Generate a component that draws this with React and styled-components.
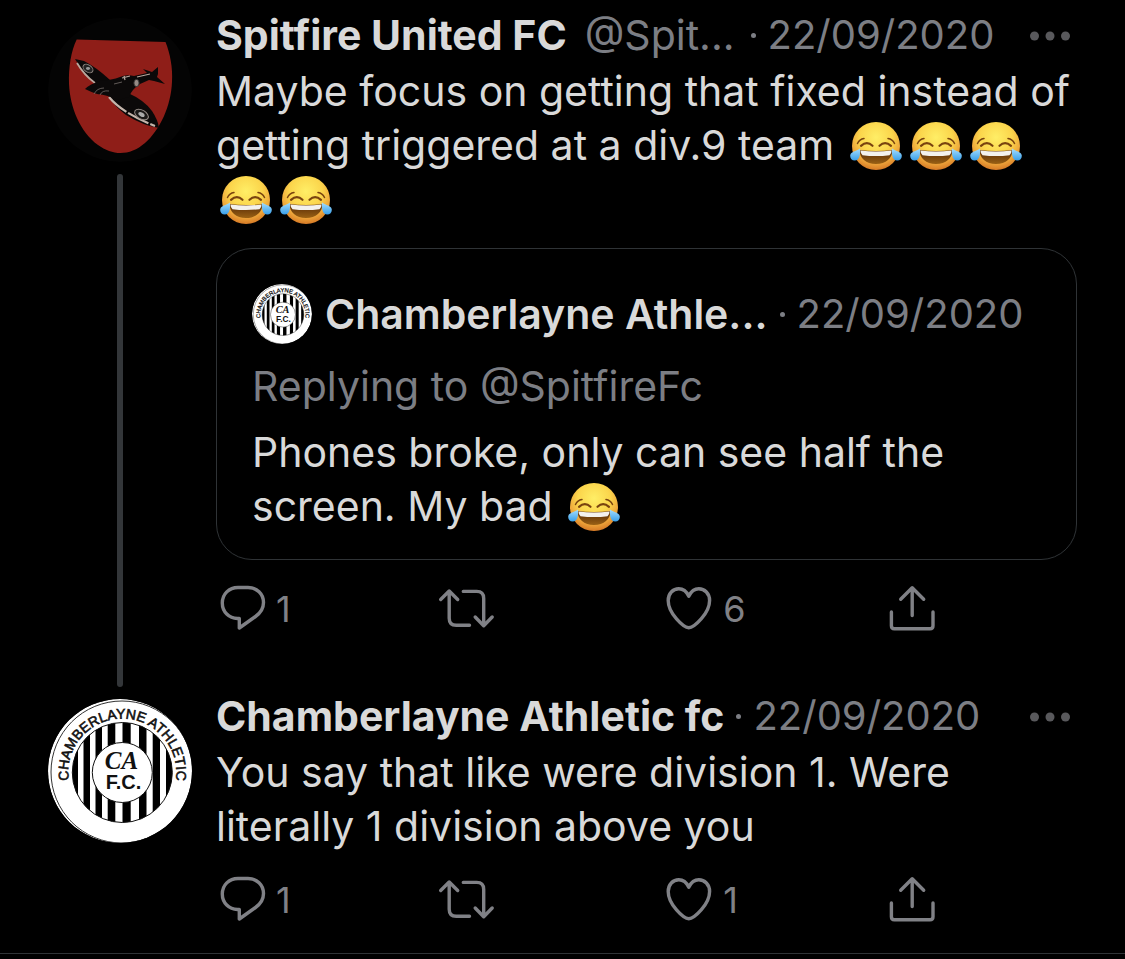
import { useId } from "react";
import styled, { createGlobalStyle } from "styled-components";

const GlobalStyle = createGlobalStyle`
  * {
    box-sizing: border-box;
  }
  body {
    margin: 0;
    background-color: #000;
    color: #d9d9d9;
    font-family: Inter, "Liberation Sans", sans-serif;
    font-size: 41px;
    line-height: 54px;
  }
`;

const Thread = styled.main`
  padding-top: 6px;
  border-bottom: 1px solid #2f3336;
`;

const Post = styled.article`
  display: flex;
  gap: 24px;
  padding: 0 48px;
`;

const Side = styled.div`
  flex: none;
  width: 144px;
  padding-top: 12px;
  display: flex;
  flex-direction: column;
  align-items: center;
  gap: 12px;
`;

const ThreadLine = styled.div`
  flex: 1;
  width: 6px;
  border-radius: 3px;
  background-color: #333639;
`;

const Content = styled.div`
  flex: 1;
  min-width: 0;
  padding: 2px 0 ${(props) => (props.$last ? "29px" : "54px")};
`;

const Header = styled.header`
  display: flex;
  align-items: center;
  white-space: nowrap;
`;

const Name = styled.a`
  color: #d9d9d9;
  font-weight: 650;
  text-decoration: none;
`;

const Handle = styled.a`
  margin: 0 4px 0 18px;
  color: #7c7e84;
  text-decoration: none;
`;

const Dot = styled.span`
  flex: none;
  width: 5px;
  height: 5px;
  margin: 0 12px;
  border-radius: 50%;
  background-color: #7c7e84;
`;

const Time = styled.time`
  color: #7c7e84;
  font-size: 40px;
`;

const MoreButton = styled.button`
  margin-left: auto;
  padding: 0 6px 0 0;
  display: flex;
  border: none;
  background: none;
  color: #59595c;
`;

const Text = styled.p`
  margin: ${(props) => (props.$quoted ? "12px" : "2px")} 0 0;
`;

const Quote = styled.section`
  margin-top: 22px;
  padding: 35px 35px 26px;
  border: 1px solid #2f3336;
  border-radius: 36px;
`;

const QuoteHeader = styled(Header)`
  height: 60px;
`;

const QuoteName = styled(Name)`
  margin-left: 13px;
  font-weight: 600;
`;

const Replying = styled.p`
  margin: 15px 0 0;
  color: #7c7e84;
`;

const Actions = styled.div`
  display: grid;
  grid-template-columns: 26% 26% 26% 1fr;
  margin-top: ${(props) => (props.$tight ? "23px" : "25px")};
  padding-left: 1px;
`;

const ActionButton = styled.button`
  display: flex;
  align-items: center;
  gap: 5px;
  height: 48px;
  padding: 0;
  border: none;
  background: none;
  color: #808186;
  font-family: inherit;
  font-size: 36px;
`;

const ActionIcon = styled.svg`
  width: 54px;
  height: 48px;
  overflow: visible;
  fill: none;
  stroke: currentColor;
  stroke-width: 3.4;
  stroke-linecap: round;
  stroke-linejoin: round;
`;

const Round = styled.svg`
  flex: none;
  display: block;
  width: ${(props) => props.$size}px;
  height: ${(props) => props.$size}px;
  border-radius: 50%;
`;

const EmojiSvg = styled.svg`
  width: 52px;
  height: 48px;
  margin: 0 4px;
  vertical-align: -10px;
`;

const Joy = () => {
  const id = useId();
  return (
    <EmojiSvg viewBox="0 0 52 48" role="img" aria-label="😂">
      <defs>
        <radialGradient id={id + "f"} cx="50%" cy="32%" r="68%">
          <stop offset="0" stopColor="#ffee66" />
          <stop offset="0.5" stopColor="#fbd54c" />
          <stop offset="0.8" stopColor="#eda43a" />
          <stop offset="1" stopColor="#d67a26" />
        </radialGradient>
        <linearGradient id={id + "t"} x1="0" y1="0" x2="0" y2="1">
          <stop offset="0" stopColor="#a5deff" />
          <stop offset="1" stopColor="#399fe8" />
        </linearGradient>
        <linearGradient id={id + "m"} x1="0" y1="0" x2="0" y2="1">
          <stop offset="0.4" stopColor="#6f3e0c" />
          <stop offset="1" stopColor="#9a6114" />
        </linearGradient>
      </defs>
      <circle cx="26" cy="24" r="24" fill={`url(#${id}f)`} />
      <g fill="none" stroke="#79430f" strokeLinecap="round">
        <path d="M7.5 21.5 Q9.5 17.2 14 16.5" strokeWidth="1.5" />
        <path d="M44.5 21.5 Q42.5 17.2 38 16.5" strokeWidth="1.5" />
        <path d="M11 23.8 Q17 18.6 22.5 23.8" strokeWidth="2.2" />
        <path d="M29.5 23.8 Q35 18.6 41 23.8" strokeWidth="2.2" />
      </g>
      <path d="M9.5 28 Q26 30 42.5 28 C42.5 36 36 42 26 42 C16 42 9.5 36 9.5 28 Z" fill={`url(#${id}m)`} />
      <path d="M10.5 28.4 Q26 30.4 41.5 28.4 Q41.5 31.5 39.5 33.2 Q26 35 12.5 33.2 Q10.5 31.5 10.5 28.4 Z" fill="#f3f1ee" />
      <path d="M10 26.5 C10.5 31 10 38.5 4.8 38.5 C1.5 38.5 -0.2 35.8 0.3 33 C1 29.5 6 29.5 10 26.5 Z" fill={`url(#${id}t)`} />
      <path d="M42 26.5 C41.5 31 42 38.5 47.2 38.5 C50.5 38.5 52.2 35.8 51.7 33 C51 29.5 46 29.5 42 26.5 Z" fill={`url(#${id}t)`} />
    </EmojiSvg>
  );
};

const SpitfireAvatar = () => (
  <Round $size={144} viewBox="0 0 144 144" role="img" aria-label="Spitfire United FC">
    <circle cx="72" cy="72" r="72" fill="#040404" />
    <path
      d="M28.7 21.5 L117.5 24 C122 35 125 50 124 64 C123 88 112 112 97 125 C82 138 65 138 50 127 C32 114 22 89 21 66 C20.5 49 23 33 28.7 21.5 Z"
      fill="#8f1e18"
    />
    {/* wings */}
    <path d="M27 41 L36 43 Q48 49 62 62 L50 67 Q36 57 27 41 Z" fill="#0b0909" />
    <path d="M29 45 Q36 57 47 65" fill="none" stroke="#b9a79d" strokeWidth="1.8" />
    <path d="M60 77 L80 75 Q96 82 104 93 Q110 102 111 110 Q96 108 78 97 Q66 88 60 77 Z" fill="#0b0909" />
    <path d="M61 79 Q74 95 107 108" fill="none" stroke="#c4b5ab" strokeWidth="2.2" strokeDasharray="23 2" />
    {/* fuselage and tail */}
    <path
      d="M37 71 Q42 66 52 63 Q64 62 72 59 Q78 56 86 58 L99 55 L95 51 L104 54 L110 49 L110 56 L109 59 L117 66 L106 63 L101 62 L92 66 Q84 71 81 79 L70 82 Q60 77 49 76 Q43 74 37 71 Z"
      fill="#0b0909"
    />
    <path d="M74 60 L82 58 M76 58 L77 62 M89 59 L102 56" stroke="#b9a79d" strokeWidth="1.2" />
    <path d="M46 76 Q49 70 56 70 M52 77 Q54 72 61 73 M66 66 L74 64" fill="none" stroke="#77706c" strokeWidth="0.8" />
    {/* roundels */}
    <ellipse cx="40" cy="50.5" rx="5.5" ry="3.6" transform="rotate(35 40 50.5)" fill="#222" stroke="#8b827d" />
    <ellipse cx="40" cy="50.5" rx="2" ry="1.4" fill="#999" />
    <ellipse cx="93.5" cy="96.5" rx="7.5" ry="4.4" transform="rotate(30 93.5 96.5)" fill="#1b1918" stroke="#938a85" />
    <ellipse cx="93.5" cy="96.5" rx="3.4" ry="2" transform="rotate(30 93.5 96.5)" fill="#aaa" />
    <ellipse cx="88.5" cy="65" rx="2.6" ry="3.6" fill="#958b86" stroke="#333" />
  </Round>
);

const stripes = [
  [24, 6],
  [35.5, 6.5],
  [47.5, 6.5],
  [59.7, 7.6],
  [74.5, 8.2],
  [91, 7.5],
  [104.7, 7.3],
  [118, 7],
];

const ChamberlayneAvatar = ({ size }) => {
  const id = useId();
  return (
    <Round $size={size} viewBox="0 0 144 144" role="img" aria-label="Chamberlayne Athletic FC">
      <defs>
        <clipPath id={id + "c"}>
          <circle cx="74.3" cy="73.5" r="50" />
        </clipPath>
        <path id={id + "p"} d="M23.5 92 A54 54 0 1 1 125.1 92" />
      </defs>
      <circle cx="72" cy="72" r="72" fill="#fff" />
      <circle cx="74" cy="73" r="71" fill="none" stroke="#333" strokeWidth="1" />
      <g clipPath={`url(#${id}c)`}>
        {stripes.map(([x, w]) => (
          <rect key={x} x={x} y="20" width={w} height="108" fill="#000" />
        ))}
      </g>
      <circle cx="74.3" cy="73.5" r="50" fill="none" stroke="#111" />
      <circle cx="74.3" cy="73.5" r="30" fill="#fff" stroke="#111" />
      <text fontFamily="Liberation Sans, sans-serif" fontSize="14" fill="#111" stroke="#111" strokeWidth="0.6" textAnchor="middle">
        <textPath href={`#${id}p`} startOffset="50%">
          CHAMBERLAYNE ATHLETIC
        </textPath>
      </text>
      <text x="73.5" y="70" fontFamily="Liberation Serif, serif" fontStyle="italic" fontWeight="700" fontSize="25" fill="#111" textAnchor="middle">
        CA
      </text>
      <text x="75.5" y="90" fontFamily="Liberation Sans, sans-serif" fontWeight="700" fontSize="20" fill="#111" textAnchor="middle">
        F.C.
      </text>
    </Round>
  );
};

const More = () => (
  <MoreButton type="button" aria-label="More">
    <svg width="42" height="12" viewBox="0 0 42 12" fill="currentColor">
      <circle cx="5.5" cy="7" r="4.5" />
      <circle cx="21" cy="7" r="4.5" />
      <circle cx="36.5" cy="7" r="4.5" />
    </svg>
  </MoreButton>
);

const ActionBar = ({ replies, likes, tight }) => (
  <Actions $tight={tight}>
    <ActionButton type="button" aria-label="Reply">
      <ActionIcon viewBox="0 0 54 48">
        <path d="M20.5 33.5 C12 33.2 5.3 27 5.3 18 C5.3 9 12 2.5 21 2.5 H31 C39.8 2.5 46.5 9 46.5 17.5 C46.5 23.5 43.5 28 38.5 31.5 L22.3 43 V33.5 Z" />
      </ActionIcon>
      {replies}
    </ActionButton>
    <ActionButton type="button" aria-label="Retweet">
      <ActionIcon viewBox="0 0 54 48">
        <path d="M-0.3 14.5 L8.2 6 L16.7 14.5 M8.2 7 V33.3 Q8.2 40.3 15.2 40.3 H28.5" />
        <path d="M22.3 6.4 H35.7 Q42.7 6.4 42.7 13.4 V40 M34.2 32 L42.7 40.7 L51.2 32" />
      </ActionIcon>
    </ActionButton>
    <ActionButton type="button" aria-label="Like">
      <ActionIcon viewBox="0 0 54 48">
        <path d="M24.8 42.7 C19.5 42.7 4.2 28.5 4.2 15.5 C4.2 8.5 9 3.8 14.8 3.8 C19 3.8 22.5 6.5 24.8 11.2 C27.1 6.5 30.6 3.8 34.8 3.8 C40.6 3.8 45.6 8.5 45.6 15.5 C45.6 28.5 30.1 42.7 24.8 42.7 Z" />
      </ActionIcon>
      {likes}
    </ActionButton>
    <ActionButton type="button" aria-label="Share">
      <ActionIcon viewBox="0 0 54 48">
        <path d="M24.2 30.5 V3 M12.7 14.3 L24.2 2.8 L35.7 14.3" />
        <path d="M3.4 27 V40.7 Q3.4 43.7 6.4 43.7 H42 Q45 43.7 45 40.7 V27" />
      </ActionIcon>
    </ActionButton>
  </Actions>
);

const App = () => {
  return (
    <>
      <GlobalStyle />
      <Thread>
        <Post>
          <Side>
            <SpitfireAvatar />
            <ThreadLine />
          </Side>
          <Content>
            <Header>
              <Name href="#">Spitfire United FC</Name>
              <Handle href="#">@Spit...</Handle>
              <Dot />
              <Time dateTime="2020-09-22">22/09/2020</Time>
              <More />
            </Header>
            <Text>
              Maybe focus on getting that fixed instead of getting triggered at a div.9 team <Joy />
              <Joy />
              <Joy />
              <Joy />
              <Joy />
            </Text>
            <Quote>
              <QuoteHeader>
                <ChamberlayneAvatar size={60} />
                <QuoteName href="#">Chamberlayne Athle...</QuoteName>
                <Dot />
                <Time dateTime="2020-09-22">22/09/2020</Time>
              </QuoteHeader>
              <Replying>Replying to @SpitfireFc</Replying>
              <Text $quoted>
                Phones broke, only can see half the screen. My bad <Joy />
              </Text>
            </Quote>
            <ActionBar replies={1} likes={6} />
          </Content>
        </Post>
        <Post>
          <Side>
            <ChamberlayneAvatar size={144} />
          </Side>
          <Content $last>
            <Header>
              <Name href="#">Chamberlayne Athletic fc</Name>
              <Dot />
              <Time dateTime="2020-09-22">22/09/2020</Time>
              <More />
            </Header>
            <Text>You say that like were division 1. Were literally 1 division above you</Text>
            <ActionBar replies={1} likes={1} tight />
          </Content>
        </Post>
      </Thread>
    </>
  );
};

export default App;
